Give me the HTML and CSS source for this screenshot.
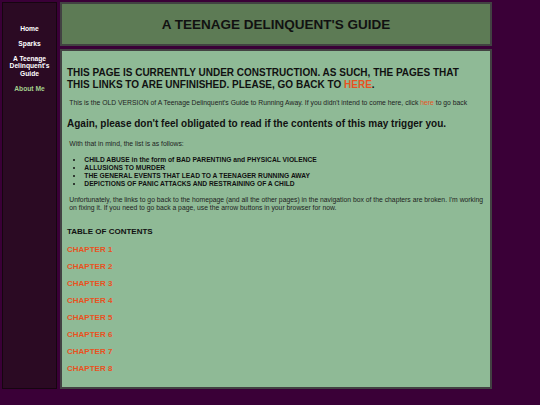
FILE: index.html
```html
<!DOCTYPE html>
<html>
<head>
<meta charset="utf-8">
<title>A Teenage Delinquent's Guide</title>
<link rel="stylesheet" href="styles.css">
</head>
<body>
<div class="page">
  <nav class="sidebar">
    <a class="nav-link" href="#">Home</a>
    <a class="nav-link" href="#">Sparks</a>
    <a class="nav-link" href="#">A Teenage Delinquent's Guide</a>
    <a class="nav-link nav-current" href="#">About Me</a>
  </nav>
  <div class="column">
    <header class="header">
      <h1 class="title">A TEENAGE DELINQUENT'S GUIDE</h1>
    </header>
    <main class="main">
      <h2 class="notice">THIS PAGE IS CURRENTLY UNDER CONSTRUCTION. AS SUCH, THE PAGES THAT THIS LINKS TO ARE UNFINISHED. PLEASE, GO BACK TO <a class="hot" href="#">HERE</a>.</h2>
      <p class="small">This is the OLD VERSION of A Teenage Delinquent's Guide to Running Away. If you didn't intend to come here, click <a class="hot" href="#">here</a> to go back</p>
      <h3 class="warning">Again, please don't feel obligated to read if the contents of this may trigger you.</h3>
      <p class="small intro">With that in mind, the list is as follows:</p>
      <ul class="triggers">
        <li>CHILD ABUSE in the form of BAD PARENTING and PHYSICAL VIOLENCE</li>
        <li>ALLUSIONS TO MURDER</li>
        <li>THE GENERAL EVENTS THAT LEAD TO A TEENAGER RUNNING AWAY</li>
        <li>DEPICTIONS OF PANIC ATTACKS AND RESTRAINING OF A CHILD</li>
      </ul>
      <p class="small">Unfortunately, the links to go back to the homepage (and all the other pages) in the navigation box of the chapters are broken. I'm working on fixing it. If you need to go back a page, use the arrow buttons in your browser for now.</p>
      <h4 class="toc-title">TABLE OF CONTENTS</h4>
      <a class="chapter" href="#">CHAPTER 1</a>
      <a class="chapter" href="#">CHAPTER 2</a>
      <a class="chapter" href="#">CHAPTER 3</a>
      <a class="chapter" href="#">CHAPTER 4</a>
      <a class="chapter" href="#">CHAPTER 5</a>
      <a class="chapter" href="#">CHAPTER 6</a>
      <a class="chapter" href="#">CHAPTER 7</a>
      <a class="chapter" href="#">CHAPTER 8</a>
    </main>
  </div>
</div>
</body>
</html>
```
FILE: styles.css
```css
html, body {
  margin: 0;
  padding: 0;
}

body {
  background: #3a0037;
  font-family: "Liberation Sans", Arial, sans-serif;
  color: #161616;
}

.page {
  display: flex;
  gap: 3px;
  padding: 2px;
  align-items: flex-start;
}

.sidebar {
  box-sizing: border-box;
  width: 55px;
  height: 387px;
  background: #2b0a23;
  border: 1px solid #160510;
  display: flex;
  flex-direction: column;
  align-items: center;
  gap: 7.6px;
  padding: 21.5px 4px 0;
}

.nav-link {
  display: block;
  color: #ffffff;
  font-weight: bold;
  font-size: 6.7px;
  line-height: 7.5px;
  text-align: center;
  text-decoration: none;
}

.nav-current {
  color: #a3cf8e;
}

.column {
  width: 432px;
  display: flex;
  flex-direction: column;
  gap: 3px;
}

.header {
  height: 44px;
  box-sizing: border-box;
  background: #5d7b55;
  border: 2px solid #424242;
  display: flex;
  align-items: center;
  justify-content: center;
}

.title {
  margin: 0;
  font-size: 13.5px;
  line-height: 15px;
  font-weight: bold;
  color: #111;
}

.main {
  height: 340px;
  box-sizing: border-box;
  background: #8fba96;
  border: 2px solid #424242;
  padding: 16px 6px 0 5px;
  display: flex;
  flex-direction: column;
  align-items: flex-start;
}

.notice {
  margin: 0;
  font-size: 10px;
  line-height: 12px;
  font-weight: bold;
  color: #111;
}

.hot {
  color: #e8521f;
  text-decoration: none;
}

.small {
  margin: 8px 0 0;
  padding-left: 2.3px;
  font-size: 6.8px;
  line-height: 8px;
  color: #1e1e1e;
}

.intro {
  margin-top: 10px;
}

.warning {
  margin: 11px 0 0;
  font-size: 10px;
  line-height: 12px;
  font-weight: bold;
  color: #111;
}

.triggers {
  margin: 8px 0 0;
  padding-left: 17.3px;
  font-size: 6.7px;
  line-height: 8px;
  font-weight: bold;
  color: #111;
}

.toc-title {
  margin: 14.5px 0 0;
  font-size: 8px;
  line-height: 9px;
  font-weight: bold;
  color: #111;
}

.chapter {
  display: block;
  margin-top: 8.15px;
  font-size: 8px;
  line-height: 9px;
  font-weight: bold;
  color: #e8521f;
  text-decoration: none;
}

.toc-title + .chapter {
  margin-top: 9px;
}
```
